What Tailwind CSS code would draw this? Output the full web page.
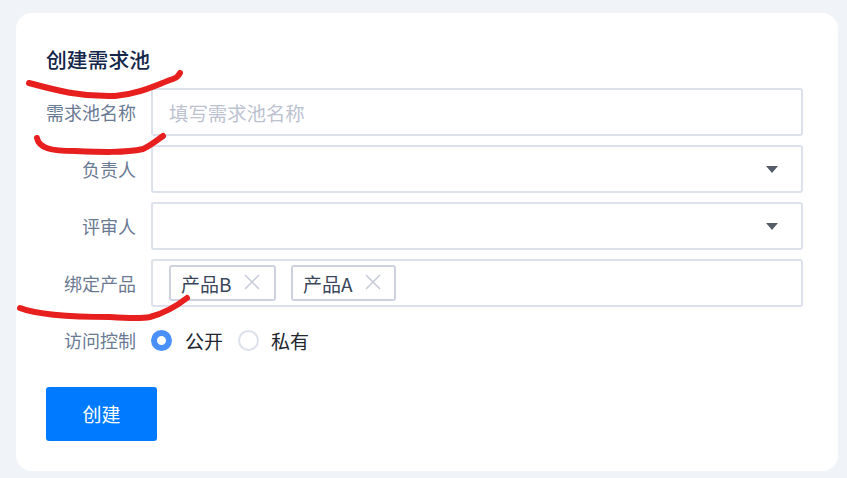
<!DOCTYPE html>
<html lang="zh-CN">
<head>
    <meta charset="UTF-8">
    <title>创建需求池</title>
    <script src="https://cdn.jsdelivr.net/npm/@tailwindcss/browser@4"></script>
</head>
<body class="bg-[#f0f4f8] w-[847px] h-[478px] overflow-hidden relative font-['Noto_Sans_CJK_SC','Noto_Sans',sans-serif]">
    <div class="mt-[13px] ml-4 w-[822px] h-[458px] bg-white rounded-2xl pt-[30px] pl-[30px] pr-[35px]">
        <h2 class="text-[20.8px] leading-[32px] font-medium text-[#14264a] h-[45px]">创建需求池</h2>

        <div class="flex flex-col gap-[9px]">
            <div class="flex items-center">
                <label class="w-[90px] text-right text-[18px] leading-6 text-[#6b7a93] shrink-0">需求池名称</label>
                <div class="ml-[15px] flex-1 h-[48px] border-2 border-[#dde1ec] rounded-[3px] flex items-center pt-[2px] pl-[16px] text-[19.4px] leading-6 text-[#bcc2cf]">填写需求池名称</div>
            </div>
            <div class="flex items-center">
                <label class="w-[90px] text-right text-[18px] leading-6 text-[#6b7a93] shrink-0">负责人</label>
                <div class="ml-[15px] flex-1 h-[48px] border-2 border-[#dde1ec] rounded-[3px] flex items-center justify-end pr-[23px]">
                    <div class="w-0 h-0 border-x-[6.5px] border-x-transparent border-t-[7px] border-t-[#565c6a]"></div>
                </div>
            </div>
            <div class="flex items-center">
                <label class="w-[90px] text-right text-[18px] leading-6 text-[#6b7a93] shrink-0">评审人</label>
                <div class="ml-[15px] flex-1 h-[48px] border-2 border-[#dde1ec] rounded-[3px] flex items-center justify-end pr-[23px]">
                    <div class="w-0 h-0 border-x-[6.5px] border-x-transparent border-t-[7px] border-t-[#565c6a]"></div>
                </div>
            </div>
            <div class="flex items-center">
                <label class="w-[90px] text-right text-[18px] leading-6 text-[#6b7a93] shrink-0">绑定产品</label>
                <div class="ml-[15px] flex-1 h-[48px] border-2 border-[#dde1ec] rounded-[3px] flex items-center pl-[16px] gap-[15px]">
                    <span class="h-[36px] w-[107px] border-2 border-[#cdd2de] rounded-[3px] flex items-center pt-[1px] pl-[10px] text-[19px] leading-6 text-[#3a465c]">
                        产品B
                        <svg class="ml-[13px] mb-[4px]" width="16" height="16" viewBox="0 0 16 16" fill="none" stroke="#c5cad6" stroke-width="1.5"><path d="M1 1L15 15M15 1L1 15"/></svg>
                    </span>
                    <span class="h-[36px] w-[105px] border-2 border-[#cdd2de] rounded-[3px] flex items-center pt-[1px] pl-[10px] text-[19px] leading-6 text-[#3a465c]">
                        产品A
                        <svg class="ml-[12px] mb-[4px]" width="16" height="16" viewBox="0 0 16 16" fill="none" stroke="#c5cad6" stroke-width="1.5"><path d="M1 1L15 15M15 1L1 15"/></svg>
                    </span>
                </div>
            </div>
            <div class="flex items-center h-[48px]">
                <label class="w-[90px] text-right text-[18px] leading-6 text-[#6b7a93] shrink-0">访问控制</label>
                <span class="ml-[15px] w-[21px] h-[21px] rounded-full border-[6px] border-[#4a90fb] bg-white shrink-0"></span>
                <span class="ml-[13px] pt-[2px] text-[19px] leading-6 text-[#222630]">公开</span>
                <span class="ml-[15px] w-[21px] h-[21px] rounded-full border-2 border-[#dde1ec] bg-white shrink-0"></span>
                <span class="ml-[12px] pt-[2px] text-[19px] leading-6 text-[#222630]">私有</span>
            </div>
        </div>

        <button class="mt-[23px] w-[111px] h-[54px] bg-[#007bff] rounded-[3px] text-white text-[19px] leading-6">创建</button>
    </div>

    <!-- 红色手绘标记 -->
    <svg class="absolute inset-0 pointer-events-none" width="847" height="478" viewBox="0 0 847 478" fill="none" stroke="#e81f1f" stroke-width="6" stroke-linecap="round" stroke-linejoin="round">
        <path d="M29 83C55 90 80 97 115 96C140 94 158 84 173 79C176 78 179 75 180 73"/>
        <path d="M37 138C39 148 50 151 75 151C100 152 125 153 143 149C150 146 156 141 163 136"/>
        <path d="M20 308C40 316 80 317 110 317C125 318 140 319 150 317C165 313 178 305 187 298"/>
    </svg>
</body>
</html>
